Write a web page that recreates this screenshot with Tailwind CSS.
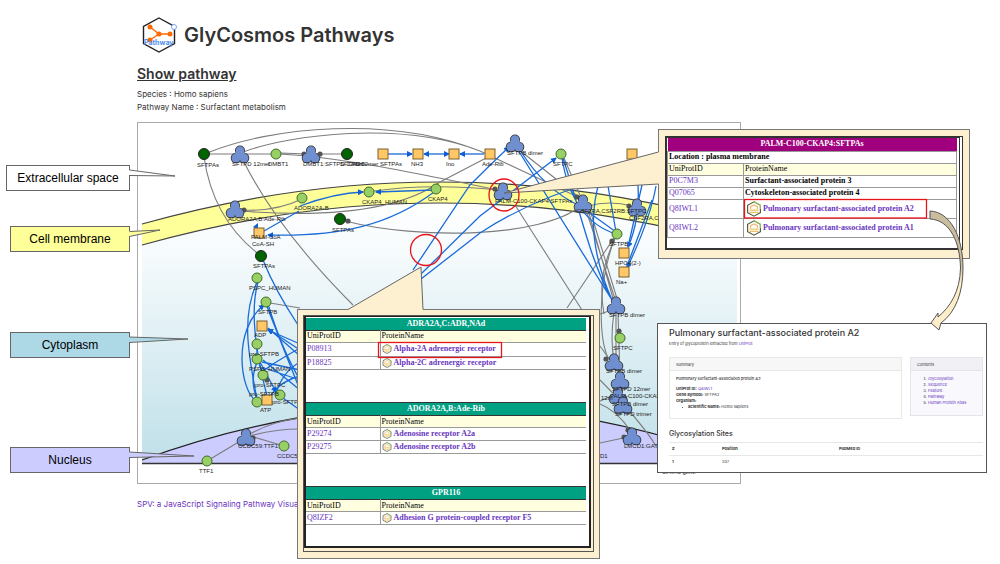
<!DOCTYPE html>
<html lang="en">
<head>
<meta charset="utf-8">
<meta name="viewport" content="width=device-width, initial-scale=1">
<title>GlyCosmos Pathways</title>
<script src="https://cdn.jsdelivr.net/npm/@tailwindcss/browser@4"></script>
</head>
<body class="bg-white font-['Inter',sans-serif] text-[#333]">
<svg class="absolute size-0" aria-hidden="true">
  <defs>
    <g id="cx">
      <g fill="#333"><circle cy="-4.500" r="5"/><circle cx="-4" cy="3" r="5.300"/><circle cx="4" cy="3" r="5.300"/></g>
      <g fill="#6f8fd0"><circle cy="-4.500" r="4.200"/><circle cx="-4" cy="3" r="4.500"/><circle cx="4" cy="3" r="4.500"/><path d="M-4 -4H4L6 3H-6Z"/></g>
    </g>
    <circle id="lg" r="5" fill="#99d066" stroke="#3f6b2a" stroke-width="1"/>
    <circle id="dg" r="5.500" fill="#006400" stroke="#222" stroke-width="1"/>
    <rect id="or" x="-5" y="-5" width="10" height="10" fill="#ffc766" stroke="#7a6032" stroke-width="1"/>
    <circle id="dot" r="2.600" fill="#555"/>
    <symbol id="gly" viewBox="0 0 14 14">
      <path d="M7 .7 12.600 3.800V10.200L7 13.300 1.400 10.200V3.800Z" fill="#fffdf5" stroke="#4b5f3c" stroke-width="1"/>
      <path d="M7 .7 12.600 3.800V7" fill="none" stroke="#8fc65c"/>
      <path d="M4 7V5l3-1.500 3 1.500V7" fill="none" stroke="#f3b583" stroke-width="1"/>
      <path d="M3 8h8M3 10h8" stroke="#efc36a" stroke-width="1.200"/>
    </symbol>
    <linearGradient id="cyto" x1="0" y1="0" x2="0" y2="1"><stop offset="0" stop-color="#ffffff"/><stop offset=".2" stop-color="#f5fafc"/><stop offset="1" stop-color="#bfe0e9"/></linearGradient>
    <linearGradient id="swoop" x1="0" y1="0" x2="0" y2="1"><stop offset="0" stop-color="#cabd9d"/><stop offset=".45" stop-color="#cabd9d"/><stop offset=".6" stop-color="#fdeec9"/><stop offset="1" stop-color="#fdeec9"/></linearGradient>
    <marker id="ar" viewBox="0 0 6 6" refX="5" refY="3" markerWidth="6" markerHeight="6" markerUnits="userSpaceOnUse" orient="auto-start-reverse"><path d="M0 0 6 3 0 6Z" fill="#0b5ed7"/></marker>
  </defs>
</svg>
<main class="relative min-h-screen overflow-hidden">
  <header class="h-[114px] pt-[16px] pl-[137px]">
    <div class="flex items-center gap-[6px] pl-[4px]">
      <svg class="h-[38px] w-[37px]" viewBox="0 0 37 38" role="img" aria-label="Pathway logo">
        <path d="M18 2 33.500 10.500V27.500L18 36 2.500 27.500V10.500Z" fill="none" stroke="#222" stroke-width="1.400"/>
        <path d="M9 11 18 18H29M18 18 9 24" fill="none" stroke="#ff6a00" stroke-width="1.500"/>
        <g fill="#ff6a00"><circle cx="9" cy="11" r="2.500"/><circle cx="18" cy="18" r="2.500"/><circle cx="29" cy="18" r="2.500"/><circle cx="9" cy="24" r="2.500"/></g>
        <circle cx="33" cy="11" r="2.500" fill="#fff" stroke="#7aa2f0"/>
        <text x="3" y="29" class="text-[7px] font-bold" fill="#4f8ef0">Pathway</text>
      </svg>
      <h1 class="text-[20px] leading-[38px] font-semibold">GlyCosmos Pathways</h1>
    </div>
    <h2 class="mt-[9px] text-[14px] leading-[22px] font-semibold underline">Show pathway</h2>
    <p class="mt-[3px] text-[8px] leading-[13px]">Species : Homo sapiens</p>
    <p class="text-[8px] leading-[13px]">Pathway Name : Surfactant metabolism</p>
  </header>

  <section class="relative h-[450px]" aria-label="Pathway diagram">
    <svg class="absolute top-0 left-0 h-[450px] w-[1000px]" viewBox="0 114 1000 450">
      <rect x="137.500" y="122.500" width="603" height="361" fill="#fff" stroke="#aaa"/>
      <!-- compartments -->
      <path d="M142 245Q440 161 737 245V463H142Z" fill="url(#cyto)"/>
      <path d="M142 224Q441 140 737 224V245Q441 161 142 245Z" fill="#ffff99"/>
      <path d="M142 224Q441 140 737 224M142 245Q441 161 737 245" fill="none" stroke="#444" stroke-width="1.200"/>
      <path d="M142 460Q441 351 737 460V463H142Z" fill="#ccccff"/>
      <path d="M142 460Q441 351 737 460" fill="none" stroke="#222" stroke-width="1.300"/>
      <path d="M142 463.500H737" stroke="#333" stroke-width="1.600"/>
      <!-- grey edges -->
      <g fill="none" stroke="#7d7d7d" stroke-width="1.100">
        <path d="M204 157Q213 220 261 256M207 153C270 127 390 115 480 151L580 198M243 152C290 135 400 120 480 151"/>
        <path d="M204 154H240M245 154H272M280 153L308 154M280 154L308 156M316 154H345M316 157C380 165 440 178 498 190"/>
        <path d="M243 160C270 215 310 262 353 305M240 210Q275 212 302 199M240 211C330 218 400 210 440 182L490 156"/>
        <path d="M345 221C420 240 540 238 581 206M374 191Q430 183 498 190M515 205 582 310M518 149 580 198M564 158 582 200"/>
        <path d="M588 210 614 302M590 210 618 302M586 210 616 302M567 308 614 238M588 206Q610 200 632 206M614 240C596 290 600 340 608 358"/>
        <path d="M616 312V360M614 312Q610 340 614 360M618 312 620 376M600 314 612 310M600 346 610 360M600 380Q640 420 656 446M600 404Q616 410 630 430M600 443 628 437M598 402 620 392"/>
        <path d="M207 461 242 440M250 436 284 446M250 434C268 424 284 420 300 418M250 436Q275 429 300 429M270 303 300 308M616 236C600 270 600 290 604 314"/>
      </g>
      <!-- blue edges -->
      <g fill="none" stroke="#1a6bd8" stroke-width="1.300">
        <path d="M299 211 264 231"/>
        <path d="M300 206Q335 193 363 192" marker-end="url(#ar)"/>
        <path d="M434 190 376 192" marker-end="url(#ar)"/>
        <path d="M434 192C390 225 340 237 268 235" marker-end="url(#ar)"/>
        <path d="M388 154H412" marker-end="url(#ar)"/>
        <path d="M424 154H449" marker-start="url(#ar)" marker-end="url(#ar)"/>
        <path d="M484 154H460" marker-end="url(#ar)"/>
        <path d="M413 270 470 185Q490 165 509 147" marker-end="url(#ar)"/>
        <path d="M421 274 480 216Q530 178 556 158" marker-end="url(#ar)"/>
        <path d="M421 279 480 233Q530 200 600 180"/>
        <path d="M518 150 612 300M520 150Q545 190 580 206L616 232M563 158C580 210 590 260 612 300M562 158Q572 220 616 234M607 180 616 232M600 180C590 210 590 250 612 300"/>
        <path d="M638 185Q640 220 628 247" marker-end="url(#ar)"/>
        <path d="M656 186Q650 220 627 268" marker-end="url(#ar)"/>
        <path d="M642 185 628 247M652 200 627 266"/>
        <path d="M263 260Q275 290 298 325M257 282C240 320 250 360 257 400M258 282C250 310 255 350 267 396"/>
        <path d="M256 401C240 390 232 330 264 305" marker-end="url(#ar)"/>
        <path d="M266 304Q280 340 300 390M268 304Q282 350 300 380"/>
        <path d="M300 344 268 330" marker-end="url(#ar)"/>
        <path d="M300 350 268 329" marker-end="url(#ar)"/>
        <path d="M300 356 268 328M300 348Q270 365 262 372M300 362Q282 372 276 394M300 370 262 362M300 390 263 360M300 380 264 368M300 410 280 396M300 376Q282 380 270 396M257 346V360M258 360 263 375M257 362C250 380 254 390 257 400"/>
        <path d="M260 362 276 392" marker-end="url(#ar)"/>
      </g>
      <!-- nodes -->
      <g>
        <use href="#dg" x="204" y="154"/><use href="#cx" x="240" y="155"/><use href="#lg" x="276" y="154"/><use href="#dot" x="304" y="154"/><use href="#cx" x="311" y="155"/><use href="#dot" x="320" y="154"/><use href="#dg" x="347" y="154"/>
        <use href="#or" x="383" y="154"/><use href="#or" x="418" y="154"/><use href="#or" x="454" y="154"/><use href="#or" x="490" y="154"/><use href="#cx" x="515" y="144"/><use href="#lg" x="561" y="154"/><use href="#or" x="632" y="154"/>
        <use href="#dot" x="495" y="189"/><use href="#cx" x="503" y="192"/><use href="#lg" x="369" y="192"/><use href="#lg" x="436" y="189"/><use href="#lg" x="302" y="198"/><use href="#dot" x="244" y="210"/><use href="#cx" x="235" y="210"/>
        <path d="M253 227 258 223V229Z" fill="#0b5ed7"/><use href="#or" x="259" y="233"/><use href="#dg" x="261" y="256"/><use href="#dot" x="348" y="221"/><use href="#dg" x="340" y="219"/>
        <use href="#lg" x="257" y="278"/><use href="#lg" x="266" y="302"/><use href="#or" x="262" y="326"/><use href="#lg" x="257" y="344"/><use href="#lg" x="257" y="359"/><use href="#dot" x="267" y="380"/><use href="#lg" x="263" y="375"/><use href="#lg" x="280" y="395"/><use href="#lg" x="257" y="402"/><use href="#or" x="267" y="400"/>
        <use href="#dot" x="253" y="438"/><use href="#cx" x="246" y="438"/><use href="#lg" x="284" y="446"/><use href="#lg" x="207" y="461"/>
        <use href="#dot" x="577" y="197"/><use href="#cx" x="583" y="204"/><use href="#dot" x="629" y="206"/><use href="#cx" x="637" y="208"/><use href="#dot" x="612" y="241"/><use href="#lg" x="617" y="234"/><use href="#or" x="624" y="253"/><use href="#or" x="624" y="272"/>
        <use href="#cx" x="616" y="306"/><use href="#dot" x="619" y="331"/><use href="#lg" x="620" y="338"/><use href="#dot" x="606" y="359"/><use href="#cx" x="614" y="363"/><use href="#cx" x="618" y="396"/><use href="#cx" x="623" y="406"/><use href="#cx" x="620" y="381"/>
        <use href="#dot" x="628" y="430"/><use href="#dot" x="624" y="437"/><use href="#cx" x="632" y="437"/>
      </g>
      <g class="font-['Liberation_Sans',Arial,sans-serif] text-[6px]" fill="#222">
        <text x="197" y="167">SFTPAs</text><text x="232" y="166">SFTPD 12mer</text><text x="268" y="166">DMBT1</text><text x="303" y="166">DMBT1:SFTPD 12mer</text><text x="340" y="166">SFTPD 12mer</text><text x="353" y="166">H2O</text><text x="380" y="166">SFTPAs</text><text x="411" y="166">NH3</text><text x="446" y="166">Ino</text><text x="482" y="166">Ade-Rib</text>
        <text x="507" y="155">SFTPB dimer</text><text x="553" y="166">SFTPC</text><text x="495" y="203">PALM-C100-CKAP4:SFTPAs</text><text x="362" y="204">CKAP4_HUMAN</text><text x="428" y="201">CKAP4</text><text x="294" y="210">ADORA2A-B</text><text x="228" y="221">ADORA2A,B:Ade-Rib</text>
        <text x="251" y="239">PALM-CoA</text><text x="252" y="246">CoA-SH</text><text x="253" y="268">SFTPAs</text><text x="332" y="232">SFTPAs</text><text x="249" y="290">PSPC_HUMAN</text><text x="258" y="314">SFTPB</text><text x="254" y="337">ADP</text><text x="249" y="356">pro-SFTPB</text><text x="249" y="371">PSPB_HUMAN</text><text x="255" y="387">pro-SFTPC</text><text x="249" y="396">pro-SFTPB</text><text x="272" y="404">pro-SFTPC</text><text x="260" y="412">ATP</text>
        <text x="238" y="448">CCDC59:TTF1</text><text x="277" y="458">CCDC59</text><text x="199" y="473">TTF1</text>
        <text x="576" y="213">CSF2RA,CSF2RB:SFTPC</text><text x="629" y="220">CSF2RA,CSF2RB</text><text x="609" y="246">SFTPB</text><text x="615" y="265">HPO4(2-)</text><text x="616" y="284">Na+</text><text x="609" y="317">SFTPB dimer</text><text x="613" y="350">SFTPC</text><text x="606" y="373">SFTPB dimer</text><text x="612" y="391">SFTPD 12mer</text><text x="610" y="398">PALM-C100-CKAP4</text><text x="601" y="400">12m</text><text x="612" y="406">SFTPB dimer</text><text x="615" y="416">SFTPD trimer</text><text x="624" y="448">LMCD1:GATA6</text><text x="600" y="458">D1</text><text x="662" y="474">GATA6 gene</text>
      </g>
    </svg>

    <a href="#" class="absolute top-[384px] left-[137px] text-[8px] leading-[13px] text-[#6a35c0]">SPV: a JavaScript Signaling Pathway Visualizer</a>

    <div class="font-['Liberation_Sans',Arial,sans-serif] text-[12px] text-black">
      <div class="absolute top-[51px] left-[6px] flex h-[26px] w-[124px] items-center justify-center border border-[#666] bg-white">Extracellular space</div>
      <div class="absolute top-[112px] left-[10px] flex h-[26px] w-[120px] items-center justify-center border border-[#666] bg-[#ffff99]">Cell membrane</div>
      <div class="absolute top-[218px] left-[10px] flex h-[26px] w-[120px] items-center justify-center border border-[#666] bg-[#add8e6]">Cytoplasm</div>
      <div class="absolute top-[333px] left-[10px] flex h-[26px] w-[120px] items-center justify-center border border-[#666] bg-[#ccccff]">Nucleus</div>
    </div>

    <!-- membrane complex panel -->
    <div class="absolute top-[15px] left-[658px] w-[312px] border border-[#777] bg-[#fdf0d0] p-[6px] pb-[8px] font-['Liberation_Serif','Times_New_Roman',serif] text-[8px] text-black">
      <div class="border-2 border-r-4 border-double border-[#333] bg-white pr-[2px] pb-[10px]">
        <table class="w-full border-collapse leading-[10px]">
          <thead>
            <tr class="h-[13px] bg-[#a0007d] text-white"><th colspan="2" class="p-0">PALM-C100-CKAP4:SFTPAs</th></tr>
            <tr class="h-[12px] border border-[#999]"><th colspan="2" class="p-0 pl-px text-left">Location : plasma membrane</th></tr>
            <tr class="h-[12px] border border-[#999] bg-[#ffffe0] text-left"><th class="w-[76px] border-r border-[#999] p-0 pl-px font-normal">UniProtID</th><th class="p-0 pl-px font-normal">ProteinName</th></tr>
          </thead>
          <tbody class="text-[#6a35c0]">
            <tr class="h-[12px] border border-[#999]"><td class="border-r border-[#999] p-0 pl-px"><a href="#">P0C7M3</a></td><td class="p-0 pl-px font-bold text-black">Surfactant-associated protein 3</td></tr>
            <tr class="h-[12px] border border-[#999]"><td class="border-r border-[#999] p-0 pl-px"><a href="#">Q07065</a></td><td class="p-0 pl-px font-bold text-black">Cytoskeleton-associated protein 4</td></tr>
            <tr class="h-[19px] border border-[#999]"><td class="border-r border-[#999] p-0 pl-px"><a href="#">Q8IWL1</a></td><td class="p-0 pl-[2px] font-bold"><a href="#" class="flex items-center gap-px"><svg class="size-[16px]"><use href="#gly"/></svg>Pulmonary surfactant-associated protein A2</a></td></tr>
            <tr class="h-[19px] border border-[#999]"><td class="border-r border-[#999] p-0 pl-px"><a href="#">Q8IWL2</a></td><td class="p-0 pl-[2px] font-bold"><a href="#" class="flex items-center gap-px"><svg class="size-[16px]"><use href="#gly"/></svg>Pulmonary surfactant-associated protein A1</a></td></tr>
          </tbody>
        </table>
      </div>
    </div>

    <!-- receptor panel -->
    <div class="absolute top-[195px] left-[297px] w-[303px] border border-[#777] bg-[#fdf0d0] p-[5px] pb-[6px] font-['Liberation_Serif','Times_New_Roman',serif] text-[8px] text-black">
      <div class="border border-[#555] pr-[2px] pb-[3px]">
        <div class="h-[232px] border-t border-r-2 border-b-2 border-l-2 border-[#222] bg-white pt-px pr-[3px]">
          <div class="h-[84px]">
            <table class="w-full border-collapse leading-[10px]">
              <thead>
                <tr class="h-[12px] border-b border-[#333] bg-[#00a083] text-white"><th colspan="2" class="p-0">ADRA2A,C:ADR,NAd</th></tr>
                <tr class="h-[12px] border-b border-[#999] bg-[#ffffe0] text-left"><th class="w-[74px] border-r border-[#999] p-0 pl-px font-normal">UniProtID</th><th class="p-0 pl-px font-normal">ProteinName</th></tr>
              </thead>
              <tbody class="text-[#6a35c0]">
                <tr class="h-[14px] border-b border-[#999]"><td class="border-r border-[#999] p-0 pl-px"><a href="#">P08913</a></td><td class="p-0 pl-px font-bold"><a href="#" class="flex items-center gap-[2px]"><svg class="size-[10px]"><use href="#gly"/></svg>Alpha-2A adrenergic receptor</a></td></tr>
                <tr class="h-[13px] border-b border-[#999]"><td class="border-r border-[#999] p-0 pl-px"><a href="#">P18825</a></td><td class="p-0 pl-px font-bold"><a href="#" class="flex items-center gap-[2px]"><svg class="size-[10px]"><use href="#gly"/></svg>Alpha-2C adrenergic receptor</a></td></tr>
              </tbody>
            </table>
          </div>
          <div class="h-[84px]">
            <table class="w-full border-collapse leading-[10px]">
              <thead>
                <tr class="h-[13px] border-y border-[#333] bg-[#00a083] text-white"><th colspan="2" class="p-0">ADORA2A,B:Ade-Rib</th></tr>
                <tr class="h-[12px] border-b border-[#999] bg-[#ffffe0] text-left"><th class="w-[74px] border-r border-[#999] p-0 pl-px font-normal">UniProtID</th><th class="p-0 pl-px font-normal">ProteinName</th></tr>
              </thead>
              <tbody class="text-[#6a35c0]">
                <tr class="h-[13px] border-b border-[#999]"><td class="border-r border-[#999] p-0 pl-px"><a href="#">P29274</a></td><td class="p-0 pl-px font-bold"><a href="#" class="flex items-center gap-[2px]"><svg class="size-[10px]"><use href="#gly"/></svg>Adenosine receptor A2a</a></td></tr>
                <tr class="h-[13px] border-b border-[#999]"><td class="border-r border-[#999] p-0 pl-px"><a href="#">P29275</a></td><td class="p-0 pl-px font-bold"><a href="#" class="flex items-center gap-[2px]"><svg class="size-[10px]"><use href="#gly"/></svg>Adenosine receptor A2b</a></td></tr>
              </tbody>
            </table>
          </div>
          <table class="w-full border-collapse leading-[10px]">
            <thead>
              <tr class="h-[13px] border-y border-[#333] bg-[#00a083] text-white"><th colspan="2" class="p-0">GPR116</th></tr>
              <tr class="h-[12px] border-b border-[#999] bg-[#ffffe0] text-left"><th class="w-[74px] border-r border-[#999] p-0 pl-px font-normal">UniProtID</th><th class="p-0 pl-px font-normal">ProteinName</th></tr>
            </thead>
            <tbody class="text-[#6a35c0]">
              <tr class="h-[13px] border-b border-[#999]"><td class="border-r border-[#999] p-0 pl-px"><a href="#">Q8IZF2</a></td><td class="p-0 pl-px font-bold"><a href="#" class="flex items-center gap-[2px]"><svg class="size-[10px]"><use href="#gly"/></svg>Adhesion G protein-coupled receptor F5</a></td></tr>
            </tbody>
          </table>
        </div>
      </div>
    </div>

    <!-- protein entry card -->
    <article class="absolute top-[209px] left-[657px] h-[150px] w-[330px] border border-[#555] bg-white pt-[3px] pr-[3px] pl-[11px] text-[4px] leading-[6px]">
      <h3 class="text-[9px] leading-[12px] font-medium">Pulmonary surfactant-associated protein A2</h3>
      <p class="mt-[2px]">Entry of glycoprotein extracted from <a href="#" class="text-[#6a35c0]">UniProt</a></p>
      <div class="mt-[10px] flex items-start gap-[8px]">
        <div class="h-[62px] flex-1 border border-[#e8e8e8]">
          <div class="h-[13px] border-b border-[#e8e8e8] bg-[#f7f7f7] px-[6px] leading-[13px]">Summary</div>
          <div class="px-[6px] pt-[5px]">
            <h4 class="mb-[4px] leading-[6px] font-medium">Pulmonary surfactant-associated protein A2</h4>
            <p><b>UniProt ID:</b> <a href="#" class="text-[#6a35c0]">Q8IWL1</a></p>
            <p><b>Gene Symbol:</b> SFTPA2</p>
            <p><b>Organism:</b></p>
            <ul class="list-inside list-disc pl-[6px]"><li><b>Scientific Name:</b> Homo sapiens</li></ul>
          </div>
        </div>
        <nav class="h-[59px] w-[73px] border border-[#e4e4ec] bg-[#f8f8fd]">
          <div class="h-[13px] border-b border-[#e4e4ec] bg-[#f0f0f5] px-[6px] leading-[13px]">Contents</div>
          <ol class="list-decimal pt-[5px] pl-[17px]">
            <li><a href="#" class="text-[#6a35c0]">Glycosylation</a></li><li><a href="#" class="text-[#6a35c0]">Sequence</a></li><li><a href="#" class="text-[#6a35c0]">Feature</a></li><li><a href="#" class="text-[#6a35c0]">Pathway</a></li><li><a href="#" class="text-[#6a35c0]">Human Protein Atlas</a></li>
          </ol>
        </nav>
      </div>
      <h3 class="mt-[10px] text-[7px] leading-[10px] font-medium">Glycosylation Sites</h3>
      <table class="mt-[3px] w-full table-fixed border-collapse text-left">
        <thead><tr class="h-[13px] border-y border-[#e8e8e8]"><th class="w-[50px] p-0 pl-[3px]">#</th><th class="w-[117px] p-0 pl-[3px]">Position</th><th class="p-0 pl-[3px]">PubMed ID</th></tr></thead>
        <tbody><tr class="h-[13px]"><th class="p-0 pl-[3px]">1</th><td class="p-0 pl-[3px]">207</td><td></td></tr></tbody>
      </table>
    </article>

    <!-- pointers and highlights -->
    <svg class="pointer-events-none absolute top-0 left-0 h-[450px] w-[1000px]" viewBox="0 114 1000 450" aria-hidden="true">
      <g stroke="none">
        <path d="M128 170 130 170 175 176 130 175H128Z" fill="#fff"/>
        <path d="M128 231 130 231 160 230 130 236H128Z" fill="#ffff99"/>
        <path d="M128 337 130 337 188 339 130 342H128Z" fill="#add8e6"/>
        <path d="M128 452 130 452 194 456 130 457H128Z" fill="#ccccff"/>
        <path d="M660 152H658L504 193 658 184H660Z" fill="#fdf0d0"/>
        <path d="M348 312V309L421 267 423 309V312Z" fill="#fdf0d0"/>
      </g>
      <g fill="none" stroke="#666">
        <path d="M129.500 170 175 176 129.500 175.500M129.500 231.500 160 230 129.500 236.500M129.500 337 188 339 129.500 342.500M129.500 452 194 456 129.500 457.500"/>
        <path d="M658.500 152 504 193 658.500 184M348 309.500 421 267 423 309.500"/>
        <path d="M930 211C951 212 963 238 963 268C963 292 956 312 941 323L939 330 931 323 938 313 938 317C950 307 960 292 960.500 268C960 242 950 220 930 219Z" fill="url(#swoop)" stroke="#555"/>
      </g>
      <g fill="none" stroke="#e8141c" stroke-width="1.300">
        <ellipse cx="504" cy="195" rx="15" ry="16"/>
        <circle cx="426" cy="250" r="15.500"/>
        <rect x="744.500" y="199.500" width="182" height="18.500"/>
        <rect x="378.500" y="342.500" width="123" height="15"/>
      </g>
    </svg>
  </section>
</main>
</body>
</html>
